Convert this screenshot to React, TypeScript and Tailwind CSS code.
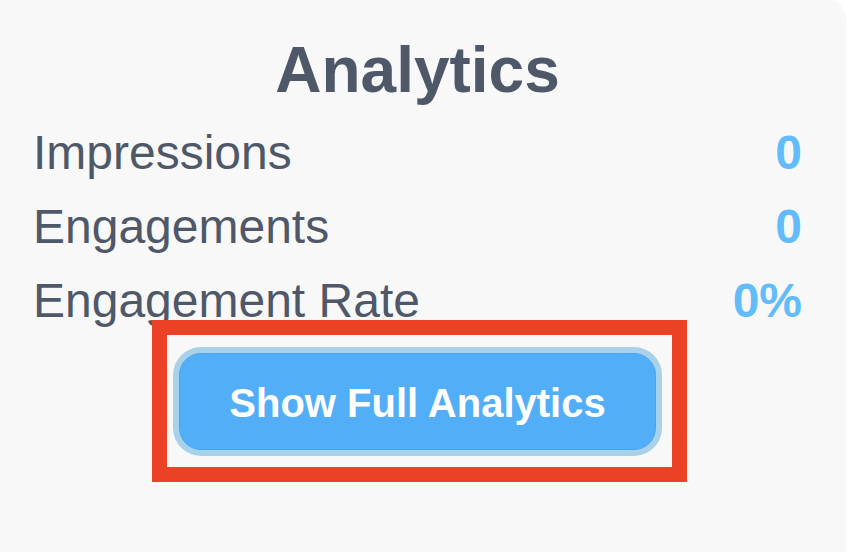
import React from 'react';

const stats = [
  { label: 'Impressions', value: '0' },
  { label: 'Engagements', value: '0' },
  { label: 'Engagement Rate', value: '0%' },
];

const App: React.FC = () => {
  return (
    <div className="h-screen bg-white overflow-hidden font-['Liberation_Sans',Arial,sans-serif]">
      <div className="ml-[-11px] mr-[2px] mt-[-4px] h-[556px] rounded-t-[24px] bg-[#f8f8f8] px-[44px] pt-[37px]">
        <h2 className="text-center text-[64px] font-bold leading-[74px] text-[#4f5868]">Analytics</h2>

        <div className="mt-[18px] flex flex-col gap-[18px]">
          {stats.map((s) => (
            <div key={s.label} className="flex items-center justify-between text-[48px] leading-[56px]">
              <span className="text-[#4f5868]">{s.label}</span>
              <span className="font-bold text-[#62bcfa]">{s.value}</span>
            </div>
          ))}
        </div>

        <div className="mt-[24px] flex justify-center">
          <div className="relative">
            <button className="flex h-[97px] w-[477px] items-center justify-center rounded-[22px] border border-[#4aa6f0] bg-[#52aef6] pt-[2px] text-[40px] font-bold text-white ring-[6px] ring-[#a8d1ea]">
              Show Full Analytics
            </button>
            {/* annotation box */}
            <div className="pointer-events-none absolute -top-[33px] -bottom-[32px] -left-[27px] -right-[31px] border-[15px] border-[#ea4127]" />
          </div>
        </div>
      </div>
    </div>
  );
};

export default App;
